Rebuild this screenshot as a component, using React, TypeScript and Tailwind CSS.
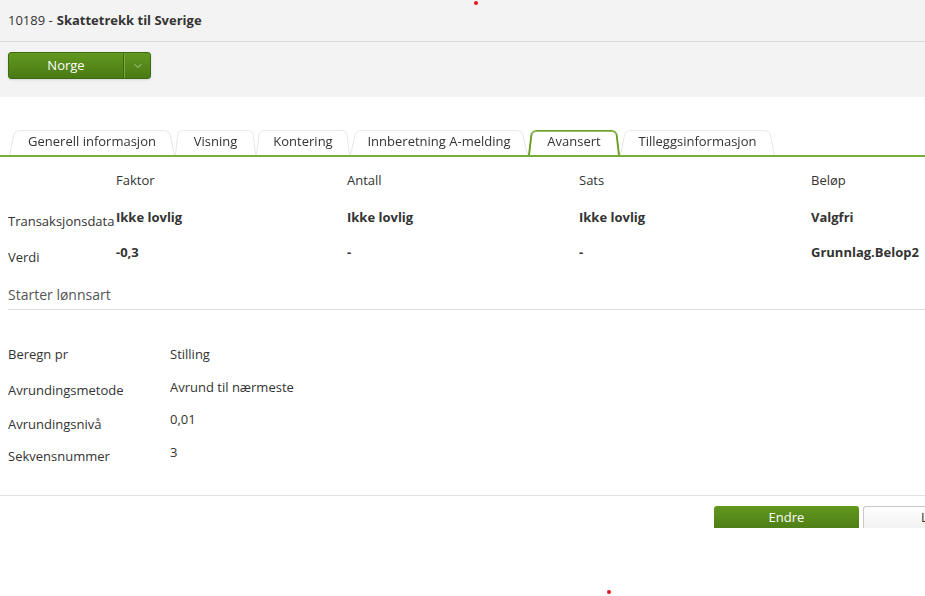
import { ChevronDown } from 'lucide-react';

const tabs = [
  { label: 'Generell informasjon', w: 'w-[166px]' },
  { label: 'Visning', w: 'w-[81px]' },
  { label: 'Kontering', w: 'w-[94px]' },
  { label: 'Innberetning A-melding', w: 'w-[178px]' },
  { label: 'Avansert', w: 'w-[92px]', active: true },
  { label: 'Tilleggsinformasjon', w: 'w-[155px]' },
];

const columns = [
  { head: 'Faktor', trans: 'Ikke lovlig', verdi: '-0,3' },
  { head: 'Antall', trans: 'Ikke lovlig', verdi: '-' },
  { head: 'Sats', trans: 'Ikke lovlig', verdi: '-' },
  { head: 'Beløp', trans: 'Valgfri', verdi: 'Grunnlag.Belop2' },
];

// row height and the small upward shift of each value in the reference
const details = [
  { label: 'Beregn pr', value: 'Stilling', h: 'h-[36px]', shift: '' },
  { label: 'Avrundingsmetode', value: 'Avrund til nærmeste', h: 'h-[34px]', shift: '-translate-y-[3px]' },
  { label: 'Avrundingsnivå', value: '0,01', h: 'h-[32px]', shift: '-translate-y-[5px]' },
  { label: 'Sekvensnummer', value: '3', h: 'h-[20px]', shift: '-translate-y-[4px]' },
];

function Tab({ label, w, active }: { label: string; w: string; active?: boolean }) {
  return (
    <div className={`relative ${w} h-[27px] flex items-center justify-center shrink-0`}>
      {/* trapezoid background */}
      <div
        className={`absolute inset-0 origin-bottom rounded-t-[6px] border border-b-0 [transform:perspective(40px)_rotateX(6deg)] ${
          active ? 'border-2 border-[#6a9e24] bg-white' : 'border-[#e6e6e6] bg-white'
        }`}
      />
      <span className="relative text-[13px] text-[#333]">{label}</span>
    </div>
  );
}

export default function App() {
  return (
    <div className="relative w-[925px] h-[596px] bg-white overflow-hidden font-['Open_Sans',sans-serif] text-[#333]">
      {/* Header band */}
      <div className="bg-[#f3f3f3] h-[97px]">
        <div className="h-[42px] flex items-center px-2 pt-[1px] border-b border-[#dadada] text-[13px]">
          <span>10189 - </span>
          <span className="font-bold ml-1">Skattetrekk til Sverige</span>
        </div>
        <div className="pl-2 pt-[10px]">
          <div className="flex w-[143px] h-[27px] rounded-[3px] border border-[#3f6a12] bg-gradient-to-b from-[#62981f] to-[#4a7a15] text-white text-[13px] shadow-sm">
            <div className="w-[115px] flex items-center justify-center border-r border-[#3f6a12]">Norge</div>
            <div className="flex-1 flex items-center justify-center border-l border-[#79a83e]">
              <ChevronDown className="w-3 h-3 text-[#d7e8c0]" strokeWidth={1.5} />
            </div>
          </div>
        </div>
      </div>

      {/* Tabs */}
      <div className="mt-[31px] flex items-end pl-[9px] border-b-2 border-[#79ad3a]">
        {tabs.map((t) => (
          <Tab key={t.label} {...t} />
        ))}
      </div>

      {/* Value table */}
      <div className="grid grid-cols-[108px_231px_232px_232px_1fr] pl-2 text-[13px]">
        <div className="h-[20px] mt-[13px]" />
        {columns.map((c) => (
          <div key={c.head} className="h-[20px] mt-[13px] leading-[20px]">{c.head}</div>
        ))}
        <div className="mt-[21px] leading-[20px]">Transaksjonsdata</div>
        {columns.map((c) => (
          <div key={c.head} className="mt-[17px] leading-[20px] font-bold">{c.trans}</div>
        ))}
        <div className="mt-[16px] leading-[20px]">Verdi</div>
        {columns.map((c) => (
          <div key={c.head} className="mt-[11px] leading-[20px] font-bold">{c.verdi}</div>
        ))}
      </div>

      {/* Starter lønnsart */}
      <div className="ml-2 mt-[18px] pb-[4px] border-b border-[#dcdcdc] text-[14px] text-[#555] leading-[20px]">
        Starter lønnsart
      </div>

      {/* Details */}
      <div className="pl-2 pt-[34px] text-[13px] flex flex-col">
        {details.map((d) => (
          <div key={d.label} className={`flex items-start ${d.h}`}>
            <div className="w-[162px] leading-[20px]">{d.label}</div>
            <div className={`leading-[20px] ${d.shift}`}>{d.value}</div>
          </div>
        ))}
      </div>

      {/* Footer */}
      <div className="mt-[29px] border-t border-[#e2e2e2]">
        <div className="mt-[10px] h-[22px] overflow-hidden flex justify-end gap-[4px]">
          <div className="w-[145px] h-[26px] rounded-[3px] bg-gradient-to-b from-[#62981f] to-[#4a7a15] text-white text-[13px] flex items-center justify-center">
            <span className="-translate-y-[1px]">Endre</span>
          </div>
          <div className="w-[62px] h-[26px] rounded-l-[3px] border border-r-0 border-[#c8c8c8] bg-gradient-to-b from-white to-[#f0f0f0] text-[13px] flex items-center pl-[57px]">
            <span className="-translate-y-[1px]">Lukk</span>
          </div>
        </div>
      </div>

      {/* red markers */}
      <div className="absolute left-[474px] top-[1px] w-[4px] h-[4px] rounded-full bg-[#e8141e]" />
      <div className="absolute left-[607px] top-[590px] w-[4px] h-[4px] rounded-full bg-[#e8141e]" />
    </div>
  );
}
